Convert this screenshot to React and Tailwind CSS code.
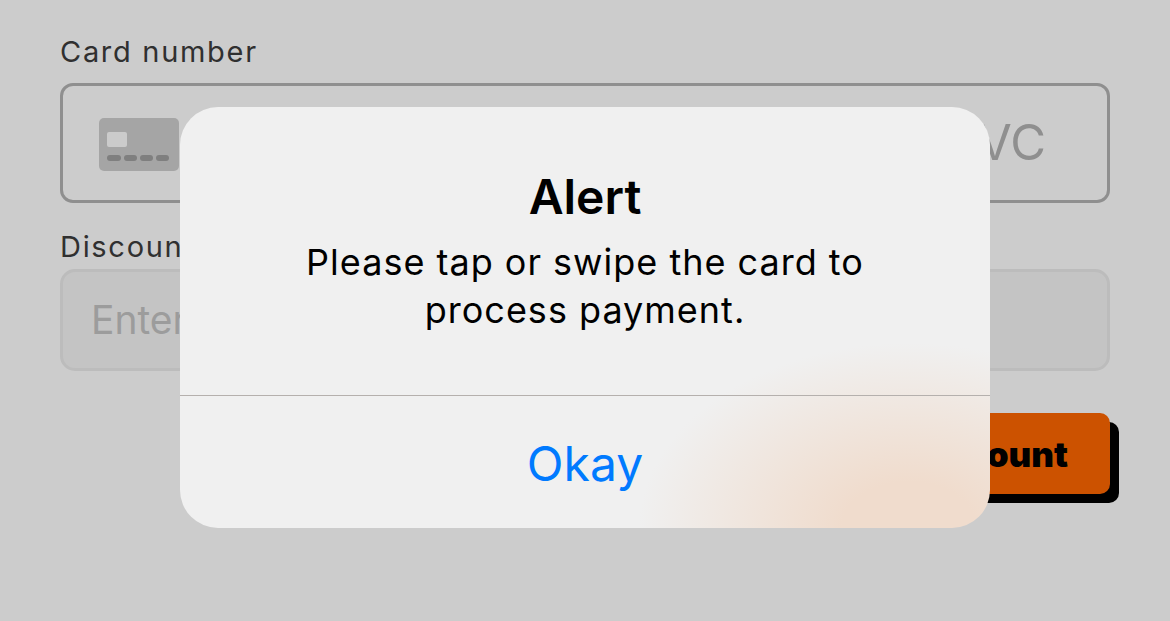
import React from 'react';

function CardIcon() {
  return (
    <svg width="80" height="53" viewBox="0 0 80 53" className="shrink-0 mt-[3px]">
      <rect x="0" y="0" width="80" height="53" rx="5" fill="#a5a5a5" />
      <rect x="8" y="14" width="20" height="15" rx="2" fill="#cbcbcb" />
      <rect x="8" y="37" width="14" height="6" rx="3" fill="#7f7f7f" />
      <rect x="25" y="37" width="13" height="6" rx="3" fill="#7f7f7f" />
      <rect x="41" y="37" width="13" height="6" rx="3" fill="#7f7f7f" />
      <rect x="57" y="37" width="13" height="6" rx="3" fill="#7f7f7f" />
    </svg>
  );
}

export default function App() {
  return (
    <div className="relative w-[1170px] h-[621px] overflow-hidden bg-[#cccccc] font-['Inter',sans-serif]">
      {/* ── Form behind the alert ── */}
      <div className="flex flex-col px-[60px] pt-[34px]">
        <label className="text-[29px] leading-[36px] text-[#303030] font-normal tracking-[1.7px]">Card number</label>
        <div className="mt-[13px] flex items-center justify-between h-[120px] pl-[36px] pr-[61px] border-[3px] border-[#8f8f8f] rounded-[13px]">
          <CardIcon />
          <span className="text-[49px] text-[#8f8f8f]">CVC</span>
        </div>

        <label className="mt-[26px] text-[29px] leading-[36px] text-[#303030] font-normal tracking-[1.7px]">Discount code</label>
        <div className="mt-[4px] flex items-center h-[102px] pl-[28px] bg-[#c4c4c4] border-[3px] border-[#bcbcbc] rounded-[15px]">
          <span className="text-[39px] text-[#9c9c9c]">Enter code</span>
        </div>

        <div className="mt-[42px] flex justify-end">
          <button className="flex items-center h-[81px] px-[42px] pt-[2px] rounded-[10px] bg-[#cc5200] text-[35px] font-black text-black shadow-[9px_9px_0_#000]">
            Apply discount
          </button>
        </div>
      </div>

      {/* ── Alert ── */}
      <div className="absolute left-[180px] top-[107px] w-[810px] h-[421px] flex flex-col rounded-[38px] overflow-hidden bg-[radial-gradient(ellipse_270px_185px_at_90%_100%,#f0dccd_0%,#f0dccd_25%,#f0f0f0_100%)]">
        <div className="flex flex-col items-center h-[288px] pt-[63px] text-black">
          <h2 className="text-[48px] leading-[54px] font-semibold">Alert</h2>
          <p className="mt-[14px] w-[640px] text-center text-[36px] leading-[48px] tracking-[1px]">
            Please tap or swipe the card to process payment.
          </p>
        </div>
        <div className="h-px bg-[#b5b0ad]" />
        <div className="flex flex-1 items-center justify-center pt-[4px] text-[48px] text-[#007aff]">Okay</div>
      </div>
    </div>
  );
}
